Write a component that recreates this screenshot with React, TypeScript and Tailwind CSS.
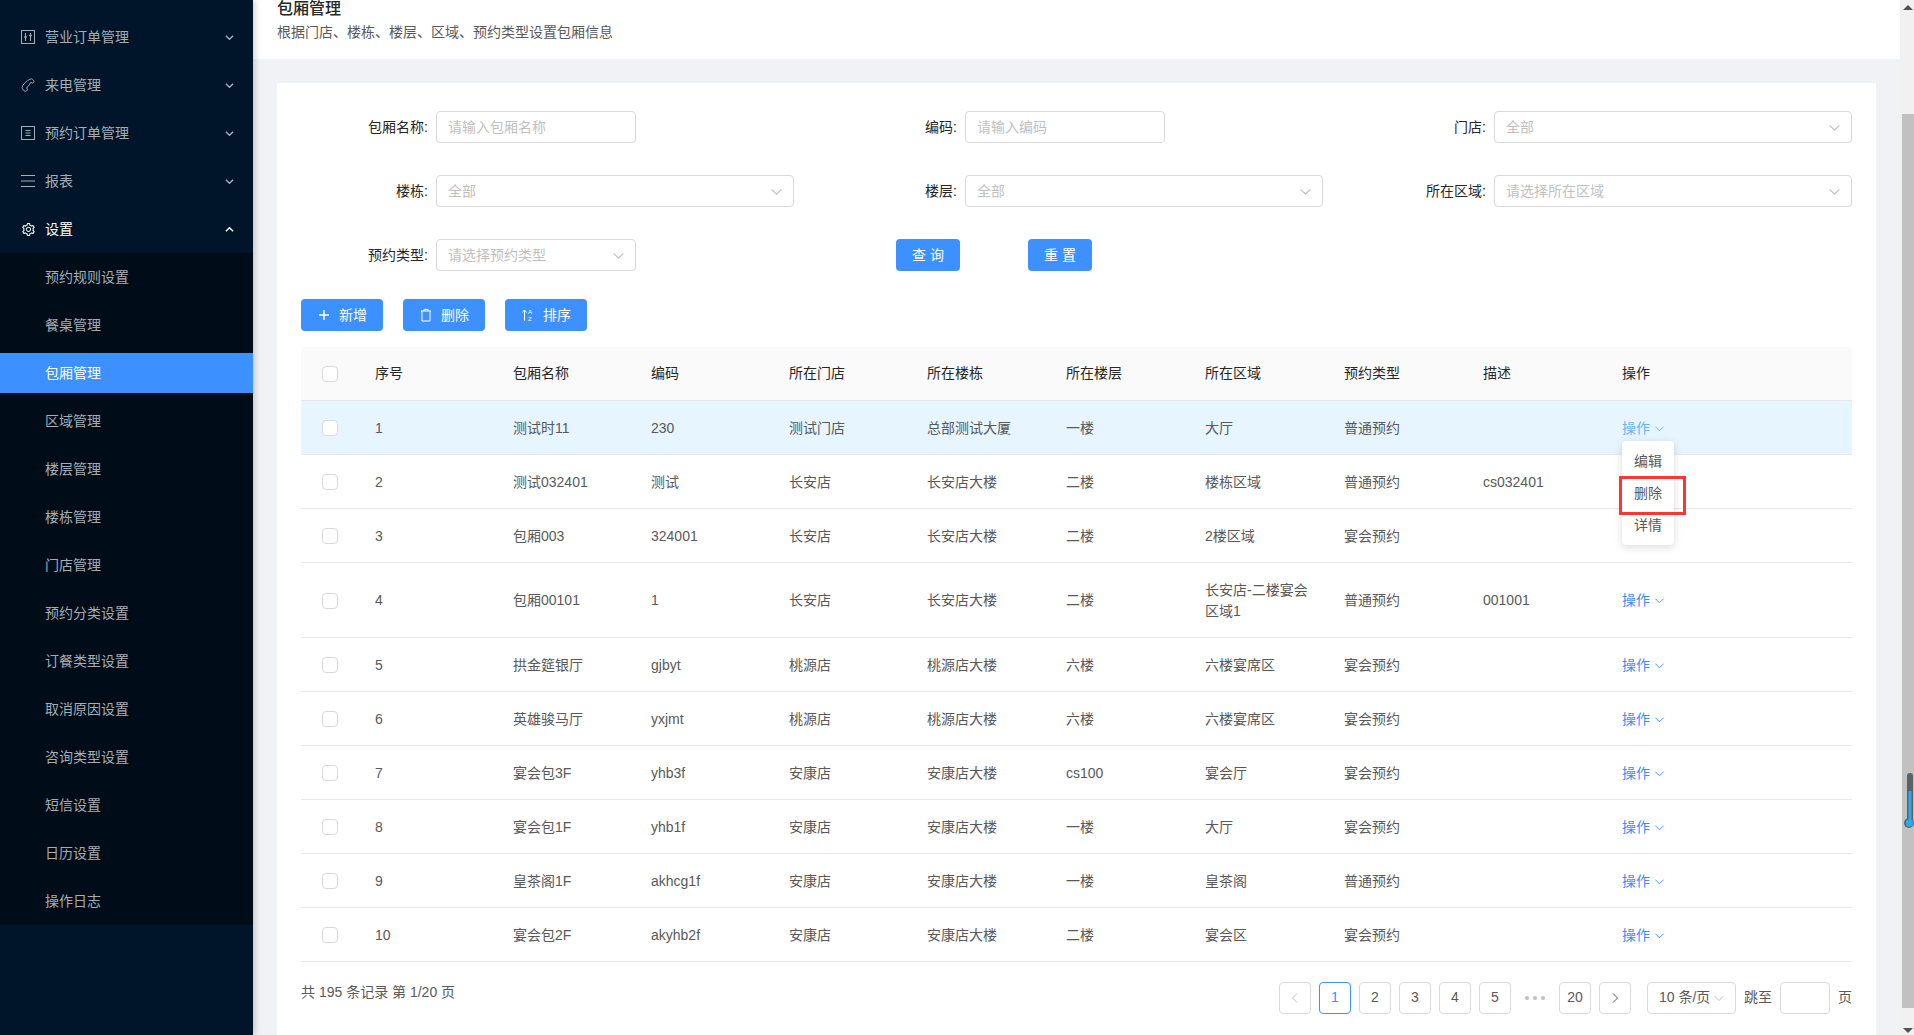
import { AiOutlineSetting } from 'react-icons/ai';

const parentMenus = [
  { name: '营业订单管理', icon: 'order' },
  { name: '来电管理', icon: 'phone' },
  { name: '预约订单管理', icon: 'book' },
  { name: '报表', icon: 'bars' },
];

const subMenus = [
  '预约规则设置',
  '餐桌管理',
  '包厢管理',
  '区域管理',
  '楼层管理',
  '楼栋管理',
  '门店管理',
  '预约分类设置',
  '订餐类型设置',
  '取消原因设置',
  '咨询类型设置',
  '短信设置',
  '日历设置',
  '操作日志',
];

const columns = ['序号', '包厢名称', '编码', '所在门店', '所在楼栋', '所在楼层', '所在区域', '预约类型', '描述', '操作'];

const rows = [
  ['1', '测试时11', '230', '测试门店', '总部测试大厦', '一楼', '大厅', '普通预约', ''],
  ['2', '测试032401', '测试', '长安店', '长安店大楼', '二楼', '楼栋区域', '普通预约', 'cs032401'],
  ['3', '包厢003', '324001', '长安店', '长安店大楼', '二楼', '2楼区域', '宴会预约', ''],
  ['4', '包厢00101', '1', '长安店', '长安店大楼', '二楼', '长安店-二楼宴会区域1', '普通预约', '001001'],
  ['5', '拱金筵银厅', 'gjbyt', '桃源店', '桃源店大楼', '六楼', '六楼宴席区', '宴会预约', ''],
  ['6', '英雄骏马厅', 'yxjmt', '桃源店', '桃源店大楼', '六楼', '六楼宴席区', '宴会预约', ''],
  ['7', '宴会包3F', 'yhb3f', '安康店', '安康店大楼', 'cs100', '宴会厅', '宴会预约', ''],
  ['8', '宴会包1F', 'yhb1f', '安康店', '安康店大楼', '一楼', '大厅', '宴会预约', ''],
  ['9', '皇茶阁1F', 'akhcg1f', '安康店', '安康店大楼', '一楼', '皇茶阁', '普通预约', ''],
  ['10', '宴会包2F', 'akyhb2f', '安康店', '安康店大楼', '二楼', '宴会区', '宴会预约', ''],
];

const Chevron = ({ className }: { className: string }) => (
  <svg viewBox="0 0 12 12" fill="none" stroke="currentColor" strokeWidth="1" className={className}>
    <path d="M1.5 4 L6 8.5 L10.5 4" />
  </svg>
);

const MenuArrow = ({ up }: { up?: boolean }) => (
  <svg viewBox="0 0 10 10" fill="none" stroke="currentColor" strokeWidth="1.6" className="w-[9px] h-[9px]">
    <path d={up ? 'M1 7 L5 3 L9 7' : 'M1 3 L5 7 L9 3'} />
  </svg>
);

const MenuIcon = ({ type }: { type: string }) => {
  if (type === 'phone') {
    return (
      <svg viewBox="0 0 14 14" fill="none" stroke="currentColor" strokeWidth="1" className="w-[14px] h-[14px]">
        <path d="M9.6 1 C10.6 0.4 12.6 1.8 13 3 C13.2 3.9 12.2 5.2 11.2 5.1 L10 4.2 C8.8 6 7.2 8.4 5.6 10 L6.6 11.4 C6.6 12.4 5.2 13.4 4 13.2 C2.6 12.8 1 11 1 9.6 C1.6 6.6 5.6 2.6 9.6 1 Z" />
      </svg>
    );
  }
  if (type === 'order') {
    return (
      <svg viewBox="0 0 14 14" fill="none" stroke="currentColor" strokeWidth="1" className="w-[14px] h-[14px]">
        <rect x="0.5" y="0.5" width="13" height="13" />
        <path d="M4.5 3 V11 M9.5 3 V11" />
        <path d="M3.2 7 H5.8 M8.2 5.5 H10.8" strokeWidth="1.6" />
      </svg>
    );
  }
  if (type === 'book') {
    return (
      <svg viewBox="0 0 14 14" fill="none" stroke="currentColor" strokeWidth="1" className="w-[14px] h-[14px]">
        <rect x="0.5" y="0.5" width="13" height="13" />
        <path d="M4.5 4.5 H9.5 M4.5 7 H9.5 M4.5 9.5 H9.5" />
      </svg>
    );
  }
  return (
    <svg viewBox="0 0 14 14" fill="none" stroke="currentColor" strokeWidth="1" className="w-[14px] h-[14px]">
      <path d="M0 1.5 H14 M0 7 H14 M0 12.5 H14" />
    </svg>
  );
};

const Sidebar = () => (
  <aside className="w-[253px] shrink-0 bg-[#001529] text-[14px] leading-[21px] text-[#a6adb4] pt-[17px] z-10 shadow-[2px_0_6px_rgba(0,21,41,0.2)]">
    <div className="flex flex-col gap-2">
      {parentMenus.map((m) => (
        <div key={m.name} className="h-10 flex items-center pl-[21px] pr-[19px]">
          <MenuIcon type={m.icon} />
          <span className="ml-[10px] flex-1">{m.name}</span>
          <MenuArrow />
        </div>
      ))}
      <div className="h-10 flex items-center pl-[21px] pr-[19px] text-white">
        <AiOutlineSetting className="w-[15px] h-[15px]" />
        <span className="ml-[9px] flex-1">设置</span>
        <MenuArrow up />
      </div>
    </div>
    <div className="mt-1 bg-[#000c17] py-1 flex flex-col gap-2">
      {subMenus.map((m) => (
        <div
          key={m}
          className={`h-10 flex items-center pl-[45px] ${m === '包厢管理' ? 'bg-[#3d90ff] text-white' : ''}`}
        >
          {m}
        </div>
      ))}
    </div>
  </aside>
);

const TextInput = ({ placeholder }: { placeholder: string }) => (
  <div className="w-[200px] h-8 border border-[#d9d9d9] rounded bg-white flex items-center px-[11px] text-[#bfbfbf]">
    {placeholder}
  </div>
);

const SelectBox = ({ placeholder, short }: { placeholder: string; short?: boolean }) => (
  <div
    className={`h-8 border border-[#d9d9d9] rounded bg-white flex items-center justify-between pl-[11px] pr-[10px] text-[#bfbfbf] ${
      short ? 'w-[200px]' : 'w-[358px]'
    }`}
  >
    <span>{placeholder}</span>
    <Chevron className="w-[13px] h-[13px]" />
  </div>
);

const Label = ({ text }: { text: string }) => (
  <div className="h-8 flex items-center justify-end pr-2 text-[#262626]">{text}:</div>
);

const FilterForm = () => (
  <div className="grid grid-cols-[135px_358px_171px_358px_171px_358px] gap-y-8">
    <Label text="包厢名称" />
    <TextInput placeholder="请输入包厢名称" />
    <Label text="编码" />
    <TextInput placeholder="请输入编码" />
    <Label text="门店" />
    <SelectBox placeholder="全部" />

    <Label text="楼栋" />
    <SelectBox placeholder="全部" />
    <Label text="楼层" />
    <SelectBox placeholder="全部" />
    <Label text="所在区域" />
    <SelectBox placeholder="请选择所在区域" />

    <Label text="预约类型" />
    <SelectBox placeholder="请选择预约类型" short />
    <div className="col-span-4 flex items-center gap-[68px] pl-[102px]">
      <button className="w-16 h-8 rounded bg-[#3d90ff] text-white">查 询</button>
      <button className="w-16 h-8 rounded bg-[#3d90ff] text-white">重 置</button>
    </div>
  </div>
);

const ToolButton = ({ label, icon }: { label: string; icon: React.ReactNode }) => (
  <button className="w-[82px] h-8 rounded bg-[#3d90ff] text-white flex items-center pl-4 gap-2 shadow-[0_2px_0_rgba(0,0,0,0.015)]">
    <span className="w-[14px] h-[14px] flex items-center justify-center">{icon}</span>
    {label}
  </button>
);

const Toolbar = () => (
  <div className="flex gap-5 mt-7">
    <ToolButton
      label="新增"
      icon={
        <svg viewBox="0 0 14 14" fill="none" stroke="currentColor" strokeWidth="1.5" className="w-[14px] h-[14px]">
          <path d="M7 2 V12 M2 7 H12" />
        </svg>
      }
    />
    <ToolButton
      label="删除"
      icon={
        <svg viewBox="0 0 14 14" fill="none" stroke="currentColor" strokeWidth="1" className="w-[14px] h-[14px]">
          <path d="M2 3 H12 M5 3 V1.5 H9 V3 M3 3 V13 H11 V3" />
        </svg>
      }
    />
    <ToolButton
      label="排序"
      icon={
        <svg viewBox="0 0 14 14" fill="none" className="w-[14px] h-[14px]">
          <path d="M3.5 13 V2 M1.5 4.5 L3.5 2 L5.5 4.5" stroke="currentColor" strokeWidth="1" />
          <text x="7" y="6" fontSize="6" fill="currentColor">A</text>
          <text x="7" y="13" fontSize="6" fill="currentColor">Z</text>
        </svg>
      }
    />
  </div>
);

const Checkbox = () => <div className="w-4 h-4 border border-[#d9d9d9] rounded-sm bg-white" />;

const ActionMenu = () => (
  <div className="absolute left-4 top-[40px] w-[52px] py-1 bg-white rounded shadow-[0_2px_8px_rgba(0,0,0,0.15)] z-20 text-[#595959]">
    {['编辑', '删除', '详情'].map((item) => (
      <div key={item} className="h-8 pt-[2px] flex items-center justify-center">
        {item}
      </div>
    ))}
    <div className="absolute -left-[3px] top-[35px] w-[67px] h-[39px] border-[3px] border-[#ff3434]" />
  </div>
);

const DataTable = () => (
  <table className="w-full table-fixed border-collapse mt-4 text-[#595959]">
    <colgroup>
      <col className="w-[58px]" />
      <col className="w-[138px]" />
      <col className="w-[138px]" />
      <col className="w-[138px]" />
      <col className="w-[138px]" />
      <col className="w-[139px]" />
      <col className="w-[139px]" />
      <col className="w-[139px]" />
      <col className="w-[139px]" />
      <col className="w-[139px]" />
      <col />
    </colgroup>
    <thead>
      <tr className="bg-[#fafafa] text-[#262626] h-[53px] border-b border-[#e8e8e8]">
        <th className="pl-[21px] pt-[2px] font-normal rounded-tl">
          <Checkbox />
        </th>
        {columns.map((c) => (
          <th key={c} className="px-4 pt-px text-left font-normal last:rounded-tr">
            {c}
          </th>
        ))}
      </tr>
    </thead>
    <tbody>
      {rows.map((row, i) => (
        <tr key={row[0]} className={`border-b border-[#e8e8e8] ${i === 0 ? 'bg-[#e6f5ff]' : ''}`}>
          <td className="pl-[21px] pt-[2px]">
            <Checkbox />
          </td>
          {row.map((cell, j) => (
            <td key={j} className="px-4 pt-[17px] pb-[15px] break-all">
              {cell}
            </td>
          ))}
          <td className="px-4 pt-[17px] pb-[15px] relative">
            {/* 2,3行目はメニューの下に隠れる */}
            {i !== 1 && i !== 2 && (
              <span className={`flex items-center gap-[4px] ${i === 0 ? 'text-[#6cb0ff]' : 'text-[#3d8bff]'}`}>
                操作
                <Chevron className="w-[11px] h-[11px]" />
              </span>
            )}
            {i === 0 && <ActionMenu />}
          </td>
        </tr>
      ))}
    </tbody>
  </table>
);

const PageBox = ({ children, active }: { children: React.ReactNode; active?: boolean }) => (
  <div
    className={`w-8 h-8 rounded border flex items-center justify-center ${
      active ? 'border-[#3d90ff] text-[#3d90ff]' : 'border-[#d9d9d9] text-[#595959]'
    }`}
  >
    {children}
  </div>
);

const Pagination = () => (
  <div className="flex justify-between items-start mt-5 text-[#595959]">
    <span>共 195 条记录 第 1/20 页</span>
    <div className="flex items-center">
      <div className="flex items-center gap-2">
        <PageBox>
          <svg viewBox="0 0 12 12" fill="none" stroke="#bfbfbf" className="w-3 h-3">
            <path d="M8 1.5 L3.5 6 L8 10.5" />
          </svg>
        </PageBox>
        <PageBox active>1</PageBox>
        <PageBox>2</PageBox>
        <PageBox>3</PageBox>
        <PageBox>4</PageBox>
        <PageBox>5</PageBox>
        <div className="w-8 h-8 flex items-center justify-center gap-[4px]">
          <i className="w-[4px] h-[4px] rounded-full bg-[#bfbfbf]" />
          <i className="w-[4px] h-[4px] rounded-full bg-[#bfbfbf]" />
          <i className="w-[4px] h-[4px] rounded-full bg-[#bfbfbf]" />
        </div>
        <PageBox>20</PageBox>
        <PageBox>
          <svg viewBox="0 0 12 12" fill="none" stroke="currentColor" className="w-3 h-3">
            <path d="M4 1.5 L8.5 6 L4 10.5" />
          </svg>
        </PageBox>
      </div>
      <div className="ml-4 w-[89px] h-8 rounded border border-[#d9d9d9] flex items-center justify-between pl-[11px] pr-[10px] whitespace-nowrap">
        10 条/页
        <Chevron className="w-3 h-3 text-[#bfbfbf]" />
      </div>
      <span className="ml-2">跳至</span>
      <div className="ml-2 w-[50px] h-8 rounded border border-[#d9d9d9]" />
      <span className="ml-2">页</span>
    </div>
  </div>
);

const PageScrollbar = () => (
  <div className="w-[14px] shrink-0 bg-[#f1f1f1] relative flex flex-col items-end">
    <div className="w-[12px] h-[894px] mt-[114px] bg-[#c1c1c1]" />
    <div className="absolute top-[5px] right-[1px] w-0 h-0 border-x-[5px] border-x-transparent border-b-[5px] border-b-[#505050]" />
    <div className="absolute bottom-[2px] right-[1px] w-0 h-0 border-x-[5px] border-x-transparent border-t-[5px] border-t-[#505050]" />
    <svg viewBox="0 0 10 56" className="absolute right-0 top-[773px] w-[10px] h-[56px]">
      <rect x="3" y="0" width="6" height="50" rx="3" fill="#56636d" />
      <circle cx="5" cy="50" r="5" fill="#56636d" />
      <rect x="4.5" y="18" width="3" height="32" fill="#2ea8e6" />
      <circle cx="5.5" cy="50" r="3.8" fill="#2ea8e6" />
    </svg>
  </div>
);

export default function App() {
  return (
    <div className="h-screen flex overflow-hidden bg-[#f0f2f5] text-[14px] leading-[21px] font-['Liberation_Sans','Noto_Sans_CJK_SC',sans-serif]">
      <Sidebar />
      <div className="flex-1 min-w-0 flex flex-col">
        <header className="h-[59px] shrink-0 bg-white pl-6">
          <h1 className="-mt-[3px] text-[16px] leading-6 font-medium text-[#262626]">包厢管理</h1>
          <p className="leading-[22px] text-[#595959]">根据门店、楼栋、楼层、区域、预约类型设置包厢信息</p>
        </header>
        <main className="flex-1 pt-6 pl-6 pr-[24px]">
          <div className="h-full bg-white pt-7 px-6">
            <FilterForm />
            <Toolbar />
            <DataTable />
            <Pagination />
          </div>
        </main>
      </div>
      <PageScrollbar />
    </div>
  );
}
